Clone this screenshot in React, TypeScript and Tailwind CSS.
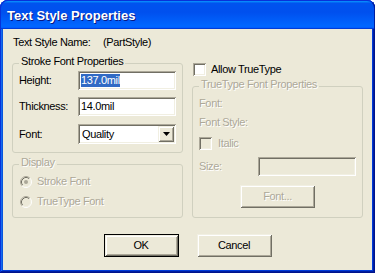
import React from "react";

const sunken =
  "shadow-[inset_1px_1px_#aca899,inset_-1px_-1px_#ffffff,inset_2px_2px_#716f64,inset_-2px_-2px_#f1efe2]";
const raised =
  "shadow-[inset_1px_1px_#f1efe2,inset_-1px_-1px_#716f64,inset_2px_2px_#ffffff,inset_-2px_-2px_#aca899]";
const disabled = "text-[#aca899] [text-shadow:1px_1px_#ffffff]";
const groupBox = "border border-[#d0d0bf] rounded-[3px] px-[6px] min-w-0";
const legendCls = "px-[2px] pb-[3px] leading-[13px]";

function Radio({ checked }: { checked?: boolean }) {
  return (
    <svg width="12" height="12" viewBox="0 0 12 12" className="shrink-0">
      <circle cx="6" cy="6" r="4.5" fill="#ece9d8" />
      <path d="M2.11 9.89 A5.5 5.5 0 0 1 9.89 2.11" fill="none" stroke="#aca899" />
      <path d="M9.89 2.11 A5.5 5.5 0 0 1 2.11 9.89" fill="none" stroke="#ffffff" />
      <path d="M2.82 9.18 A4.5 4.5 0 0 1 9.18 2.82" fill="none" stroke="#716f64" />
      <path d="M9.18 2.82 A4.5 4.5 0 0 1 2.82 9.18" fill="none" stroke="#f1efe2" />
      {checked && <circle cx="6" cy="6" r="2" fill="#aca899" />}
    </svg>
  );
}

export default function App() {
  return (
    <div className="w-[375px] h-[273px] bg-white font-['Liberation_Sans',Arial,sans-serif]">
      <div className="flex flex-col w-[375px] h-[273px] rounded-t-[8px] bg-[#0855dd] shadow-[inset_-1px_-1px_#00138c,inset_1px_1px_#0831d9,inset_-2px_-2px_#001ea0,inset_2px_2px_#166aee,inset_-3px_-3px_#003bda,inset_3px_3px_#0855dd]">
        <div className="h-[29px] shrink-0 rounded-t-[8px] border-t border-l border-r border-t-[#0831d9] border-l-[#0831d9] border-r-[#001ea0] bg-[linear-gradient(180deg,#0997ff,#0053ee_8%,#0050ee_40%,#0066ff_88%,#0066ff_93%,#005bff_95%,#003dd7_96%,#003dd7)] pl-[6px] pt-[7px] text-white font-bold text-[13px] leading-[15px] [text-shadow:1px_1px_#0a1883]">
          Text Style Properties
        </div>
        <div className="mx-[3px] mb-[3px] flex-1 bg-[#ece9d8] px-[9px] pt-[7px] pb-[13px] text-black text-[11px] leading-[13px] tracking-[-0.35px]">
          <div className="flex h-[13px]">
            <span className="w-[91px] pl-[1px]">Text Style Name:</span>
            <span>(PartStyle)</span>
          </div>

          <div className="mt-[6px] grid grid-cols-[171px_171px] gap-x-[9px]">
            {/* left column */}
            <div className="flex flex-col">
              <fieldset className={`${groupBox} pb-[8px]`}>
                <legend className={legendCls}>Stroke Font Properties</legend>
                <div className="flex items-center h-[19px]">
                  <span className="w-[59px]">Height:</span>
                  <div className={`w-[98px] h-[19px] bg-white ${sunken} flex items-center pl-[3px]`}>
                    <span className="bg-[#316ac5] text-white leading-[13px]">137.0mil</span>
                  </div>
                </div>
                <div className="mt-[7px] flex items-center h-[19px]">
                  <span className="w-[59px]">Thickness:</span>
                  <div className={`w-[98px] h-[19px] bg-white ${sunken} flex items-center pl-[3px]`}>
                    <span>14.0mil</span>
                  </div>
                </div>
                <div className="mt-[8px] flex items-center h-[20px]">
                  <span className="w-[59px]">Font:</span>
                  <div className={`w-[98px] h-[20px] bg-white ${sunken} flex items-center p-[2px]`}>
                    <span className="flex-1 pl-[2px]">Quality</span>
                    <div className={`w-[16px] h-[16px] bg-[#ece9d8] ${raised} flex items-center justify-center`}>
                      <svg width="7" height="4" viewBox="0 0 7 4">
                        <path d="M0 0H7L3.5 4Z" fill="#000" />
                      </svg>
                    </div>
                  </div>
                </div>
              </fieldset>

              <fieldset className={`${groupBox} mt-[3px] pb-[9px]`}>
                <legend className={`${legendCls} ${disabled}`}>Display</legend>
                <div className="mt-[3px] flex items-center h-[13px] pl-[1px] gap-[5px]">
                  <Radio checked />
                  <span className={disabled}>Stroke Font</span>
                </div>
                <div className="mt-[7px] flex items-center h-[13px] pl-[1px] gap-[5px]">
                  <Radio />
                  <span className={disabled}>TrueType Font</span>
                </div>
              </fieldset>
            </div>

            {/* right column */}
            <div className="flex flex-col">
              <div className="mt-[8px] flex items-center h-[13px] pl-[1px] gap-[5px]">
                <div className={`w-[13px] h-[13px] bg-white ${sunken}`} />
                <span>Allow TrueType</span>
              </div>
              <fieldset className={`${groupBox} mt-[2px] pb-[9px]`}>
                <legend className={`${legendCls} ${disabled}`}>TrueType Font Properties</legend>
                <div className={`mt-[3px] h-[13px] ${disabled}`}>Font:</div>
                <div className={`mt-[6px] h-[13px] ${disabled}`}>Font Style:</div>
                <div className="mt-[8px] flex items-center h-[13px] gap-[6px]">
                  <div className={`w-[13px] h-[13px] bg-[#ece9d8] ${sunken}`} />
                  <span className={disabled}>Italic</span>
                </div>
                <div className="mt-[7px] flex items-center h-[19px]">
                  <span className={`w-[59px] ${disabled}`}>Size:</span>
                  <div className={`w-[98px] h-[19px] bg-[#ece9d8] ${sunken}`} />
                </div>
                <div className="mt-[9px] flex justify-center">
                  <div className={`w-[75px] h-[23px] bg-[#ece9d8] ${raised} flex items-center justify-center ${disabled}`}>
                    Font...
                  </div>
                </div>
              </fieldset>
            </div>
          </div>

          <div className="mt-[16px] flex justify-center gap-[18px]">
            <div className="w-[75px] h-[23px] border border-black">
              <div className={`w-full h-full bg-[#ece9d8] ${raised} flex items-center justify-center`}>OK</div>
            </div>
            <div className={`w-[75px] h-[23px] bg-[#ece9d8] ${raised} flex items-center justify-center`}>Cancel</div>
          </div>
        </div>
      </div>
    </div>
  );
}
